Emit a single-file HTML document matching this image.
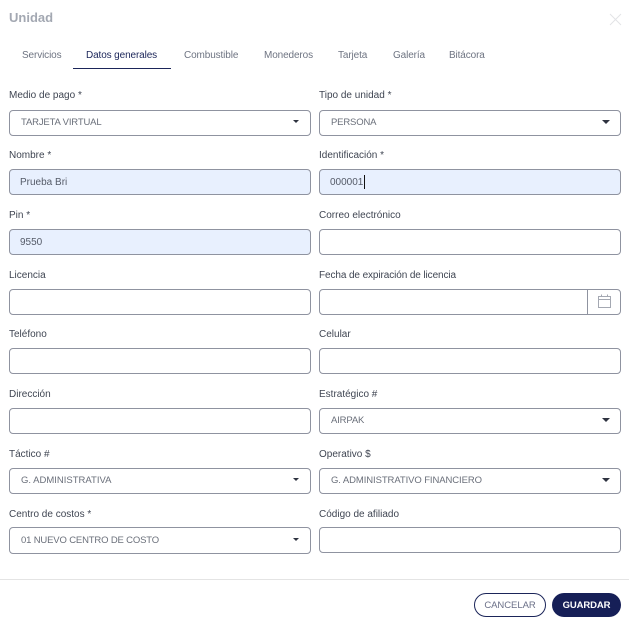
<!DOCTYPE html>
<html><head><meta charset="utf-8">
<style>
html,body{margin:0;padding:0;background:#fff;width:629px;height:622px;overflow:hidden}
body{position:relative;font-family:"Liberation Sans",sans-serif;color:#3d4350;font-size:10px}
.t{position:absolute;white-space:nowrap;line-height:14px}
.tab{top:49px;color:#6e7482;font-size:10px;letter-spacing:-.12px}
.l{color:#3f4552;font-size:10px}
.f{position:absolute;box-sizing:border-box;width:302px;height:26px;border:1px solid #8f93a0;border-radius:4px;background:#fff}
.f.b{background:#e8f0fe}
.v{position:absolute;left:11px;top:5px;line-height:14px;color:#6a6f7a;font-size:9.5px;letter-spacing:-.16px;white-space:nowrap}
.b .v{left:10px;top:6px;color:#555b68;font-size:10px;letter-spacing:0}
.c{position:absolute;right:10px;top:9px;width:0;height:0;border-left:4px solid transparent;border-right:4px solid transparent;border-top:4px solid #2e3340}
.s{right:11px;border-left-width:3.5px;border-right-width:3.5px;border-top-width:3.5px}
</style></head><body>
<div class="t" style="left:9px;top:11px;font-size:13px;font-weight:bold;color:#a3a8b2">Unidad</div>
<svg style="position:absolute;left:609px;top:13px" width="13" height="13" viewBox="0 0 13 13"><path d="M1 1L12 12M12 1L1 12" stroke="#e2e3e6" stroke-width="1" fill="none"/></svg>

<div class="t tab" style="left:22px">Servicios</div>
<div class="t tab" style="left:86px;color:#1b2559">Datos generales</div>
<div style="position:absolute;left:73px;top:68px;width:98px;height:1px;background:#1b2559"></div>
<div class="t tab" style="left:184px">Combustible</div>
<div class="t tab" style="left:264px">Monederos</div>
<div class="t tab" style="left:338px">Tarjeta</div>
<div class="t tab" style="left:393px">Galería</div>
<div class="t tab" style="left:449px">Bitácora</div>

<div class="t l" style="left:9px;top:89px">Medio de pago *</div>
<div class="t l" style="left:319px;top:89px">Tipo de unidad *</div>
<div class="f" style="left:9px;top:110px"><span class="v">TARJETA VIRTUAL</span><i class="c s"></i></div>
<div class="f" style="left:319px;top:110px"><span class="v">PERSONA</span><i class="c"></i></div>

<div class="t l" style="left:9px;top:149px">Nombre *</div>
<div class="t l" style="left:319px;top:149px">Identificación *</div>
<div class="f b" style="left:9px;top:169px"><span class="v">Prueba Bri</span></div>
<div class="f b" style="left:319px;top:169px"><span class="v">000001</span><div style="position:absolute;left:44px;top:5px;width:1px;height:14px;background:#111"></div></div>

<div class="t l" style="left:9px;top:209px">Pin *</div>
<div class="t l" style="left:319px;top:209px">Correo electrónico</div>
<div class="f b" style="left:9px;top:229px"><span class="v">9550</span></div>
<div class="f" style="left:319px;top:229px"></div>

<div class="t l" style="left:9px;top:269px">Licencia</div>
<div class="t l" style="left:319px;top:269px;letter-spacing:-.1px">Fecha de expiración de licencia</div>
<div class="f" style="left:9px;top:289px"></div>
<div class="f" style="left:319px;top:289px"><div style="position:absolute;left:267px;top:0;width:1px;height:24px;background:#8f93a0"></div>
<svg style="position:absolute;left:277px;top:4px" width="15" height="14" viewBox="0 0 15 14"><path d="M1.5 2.5H13.5V13.5H1.5ZM1.5 5.5H13.5M4.5 .5V2.5M10.5 .5V2.5" stroke="#a4a8b2" fill="none"/></svg></div>

<div class="t l" style="left:9px;top:328px">Teléfono</div>
<div class="t l" style="left:319px;top:328px">Celular</div>
<div class="f" style="left:9px;top:348px"></div>
<div class="f" style="left:319px;top:348px"></div>

<div class="t l" style="left:9px;top:388px">Dirección</div>
<div class="t l" style="left:319px;top:388px">Estratégico #</div>
<div class="f" style="left:9px;top:408px"></div>
<div class="f" style="left:319px;top:408px"><span class="v">AIRPAK</span><i class="c"></i></div>

<div class="t l" style="left:9px;top:448px">Táctico #</div>
<div class="t l" style="left:319px;top:448px">Operativo $</div>
<div class="f" style="left:9px;top:468px"><span class="v" style="letter-spacing:0">G. ADMINISTRATIVA</span><i class="c s"></i></div>
<div class="f" style="left:319px;top:468px"><span class="v" style="letter-spacing:-.09px">G. ADMINISTRATIVO FINANCIERO</span><i class="c"></i></div>

<div class="t l" style="left:9px;top:508px">Centro de costos *</div>
<div class="t l" style="left:319px;top:508px">Código de afiliado</div>
<div class="f" style="left:9px;top:527px;height:27px"><span class="v" style="top:6px">01 NUEVO CENTRO DE COSTO</span><i class="c s" style="top:10px"></i></div>
<div class="f" style="left:319px;top:527px"></div>

<div style="position:absolute;left:0;top:579px;width:629px;height:1px;background:#e4e4e4"></div>
<div style="position:absolute;box-sizing:border-box;left:474px;top:593px;width:72px;height:24px;border:1px solid #1b2559;border-radius:12px;text-align:center;line-height:23px;color:#6b7088;font-size:9.5px;letter-spacing:-.05px">CANCELAR</div>
<div style="position:absolute;left:552px;top:593px;width:69px;height:24px;background:#161f57;border-radius:12px;text-align:center;line-height:25px;color:#fff;font-size:9.5px;font-weight:bold;letter-spacing:-.1px">GUARDAR</div>
</body></html>
